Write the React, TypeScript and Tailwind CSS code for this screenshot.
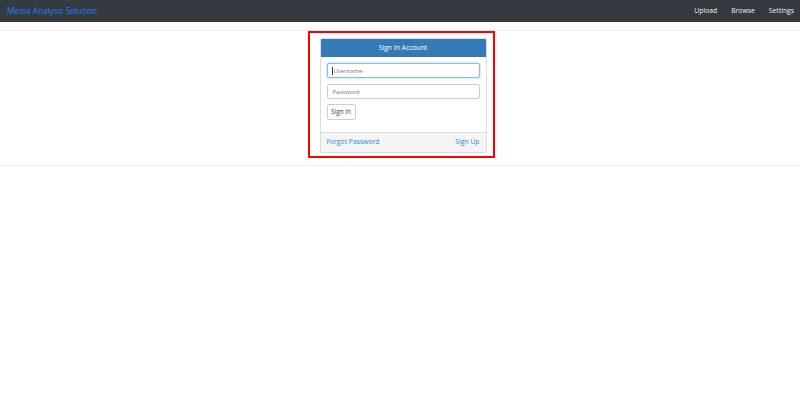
import React from 'react'

const font = { fontFamily: '"Open Sans", "Noto Sans", Arial, sans-serif' }

export default function App() {
  return (
    <div className="w-[800px] h-[402px] bg-white" style={font}>
      {/* Top navbar */}
      <nav className="h-[22px] bg-[#343a40] flex items-center justify-between pl-[7px] pr-[6px]">
        <span className="text-[8.2px] font-medium text-[#1a82f7] leading-none">Media Analysis Solution</span>
        <div className="flex items-center gap-[14px] text-[6.8px] font-medium text-[#eef0f2] leading-none">
          <span>Upload</span>
          <span>Browse</span>
          <span>Settings</span>
        </div>
      </nav>

      <div className="mt-[8px] border-t border-[#eeeeee] pb-[7px] border-b">
        <div className="flex justify-center">
          {/* highlighted region */}
          <div className="w-[187px] border-2 border-[#ff0000] pl-[10px] pr-[6px] pt-[5px] pb-[3px] ml-[2px]">
            <div className="border border-[#dddddd] rounded-[2px] overflow-hidden">
              <div className="h-[18px] bg-[#337ab7] flex items-center justify-center text-white text-[6.8px] font-medium leading-none">
                Sign In Account
              </div>
              <div className="px-[6px] pt-[6px] pb-[12px] flex flex-col">
                <div className="h-[15px] border border-[#80bdff] rounded-[2px] shadow-[0_0_0_1px_rgba(0,123,255,0.15)] flex items-center px-[4px] text-[6px] text-[#777] leading-none">
                  <span className="w-px h-[8px] bg-[#333] mr-[1px]" />
                  Username
                </div>
                <div className="mt-[6px] h-[15px] border border-[#cccccc] rounded-[2px] flex items-center px-[5px] text-[6px] text-[#777] leading-none">
                  Password
                </div>
                <div className="mt-[5px] flex">
                  <button className="h-[16px] w-[29px] border border-[#cccccc] rounded-[2px] bg-white text-[6.4px] text-[#333] leading-none flex items-center justify-center">
                    Sign In
                  </button>
                </div>
              </div>
              <div className="h-[20px] bg-[#f5f5f5] border-t border-[#dddddd] flex items-center justify-between px-[6px] text-[6.8px] font-medium text-[#2f86e0] leading-none">
                <span>Forgot Password</span>
                <span>Sign Up</span>
              </div>
            </div>
          </div>
        </div>
      </div>
    </div>
  )
}
